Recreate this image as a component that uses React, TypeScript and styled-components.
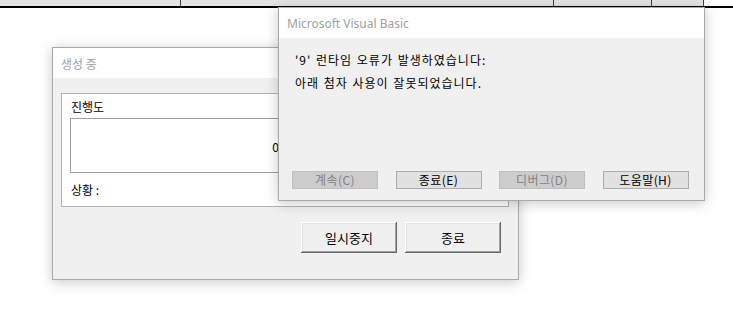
import React from 'react';
import styled, { createGlobalStyle } from 'styled-components';

const GlobalStyle = createGlobalStyle`
  html, body {
    margin: 0;
    padding: 0;
    background: #ffffff;
  }
  body {
    font-family: "Noto Sans CJK KR", "Noto Sans", sans-serif;
    font-size: 12px;
    color: #000;
  }
`;

const Desktop = styled.div`
  position: relative;
  width: 733px;
  height: 319px;
  overflow: hidden;
  background: #ffffff;
`;

// 뒤쪽 시트의 헤더 줄
const SheetStrip = styled.div`
  display: flex;
  height: 6px;
  border-bottom: 2px solid #000;
`;

const SheetCell = styled.div<{ $w: number; $blank?: boolean }>`
  width: ${(p) => p.$w}px;
  flex: none;
  background: ${(p) => (p.$blank ? '#ffffff' : '#e4e4e4')};
  border-right: ${(p) => (p.$blank ? 'none' : '1px solid #3c3c3c')};
  box-sizing: border-box;
`;

const Window = styled.div<{ $x: number; $y: number; $w: number; $h: number }>`
  position: absolute;
  left: ${(p) => p.$x}px;
  top: ${(p) => p.$y}px;
  width: ${(p) => p.$w}px;
  height: ${(p) => p.$h}px;
  box-sizing: border-box;
  display: flex;
  flex-direction: column;
  background: #f0f0f0;
  border: 1px solid #a9a9a9;
  box-shadow: 0 2px 12px rgba(0, 0, 0, 0.22);
`;

const TitleBar = styled.div<{ $latin?: boolean }>`
  height: 30px;
  flex: none;
  background: #ffffff;
  display: flex;
  align-items: center;
  padding-left: 8px;
  color: #a0a0a0;
  font-family: ${(p) =>
    p.$latin ? '"Noto Sans", "Open Sans", sans-serif' : '"Noto Sans CJK KR", sans-serif'};
  font-size: 12px;
`;

/* 생성 중 창 */
const ProgressBody = styled.div`
  flex: 1;
  display: flex;
  flex-direction: column;
  padding: 15px 9px 0 8px;
`;

const Frame = styled.div`
  height: 114px;
  box-sizing: border-box;
  background: #ffffff;
  border: 1px solid #b4b4b4;
  padding: 0 8px;
  display: flex;
  flex-direction: column;
`;

const FieldLabel = styled.div`
  height: 24px;
  line-height: 26px;
  padding-left: 1px;
  font-size: 12px;
`;

const ProgressBox = styled.div`
  height: 55px;
  box-sizing: border-box;
  border: 1px solid #a0a0a0;
  display: flex;
  align-items: center;
  justify-content: center;
  font-size: 12px;
  padding-right: 8px;
  padding-top: 1px;
`;

const StatusRow = styled.div`
  flex: 1;
  display: flex;
  align-items: center;
  padding-left: 1px;
  font-size: 12px;
`;

const ButtonRow = styled.div`
  display: flex;
  justify-content: flex-end;
  gap: 8px;
  margin-top: 15px;
  padding-right: 8px;
`;

const ClassicButton = styled.button`
  width: 96px;
  height: 31px;
  padding: 0;
  border: none;
  background: #f0f0f0;
  font-family: "Noto Sans CJK KR", sans-serif;
  font-size: 13px;
  color: #000;
  box-shadow: inset -1px -1px #696969, inset 1px 1px #ffffff, inset -2px -2px #a0a0a0,
    inset 2px 2px #e3e3e3;
`;

/* 메시지 상자 */
const MessageBody = styled.div`
  flex: 1;
  display: flex;
  flex-direction: column;
  padding: 10px 0 11px 16px;
`;

const MessageLine = styled.div`
  height: 23px;
  line-height: 23px;
  font-size: 12px;
  letter-spacing: 1px;
  word-spacing: 1px;
`;

const MessageButtons = styled.div`
  margin-top: auto;
  display: flex;
  gap: 17.5px;
  margin-left: -3px;
`;

const MsgButton = styled.button<{ $disabled?: boolean }>`
  width: 86px;
  height: 18px;
  padding: 0;
  box-sizing: border-box;
  font-family: "Noto Sans CJK KR", sans-serif;
  font-size: 12px;
  line-height: 16px;
  letter-spacing: 0.4px;
  background: ${(p) => (p.$disabled ? '#cccccc' : '#e1e1e1')};
  border: 1px solid ${(p) => (p.$disabled ? '#bfbfbf' : '#adadad')};
  color: ${(p) => (p.$disabled ? '#838383' : '#000000')};
`;

const sheetCells = [181, 373, 98, 52];

const App = () => {
  return (
    <>
      <GlobalStyle />
      <Desktop>
        <SheetStrip>
          {sheetCells.map((w, i) => (
            <SheetCell key={i} $w={w} />
          ))}
          <SheetCell $w={29} $blank />
        </SheetStrip>

        <Window $x={52} $y={47} $w={467} $h={233}>
          <TitleBar>생성 중</TitleBar>
          <ProgressBody>
            <Frame>
              <FieldLabel>진행도</FieldLabel>
              <ProgressBox>0%</ProgressBox>
              <StatusRow>상황 :</StatusRow>
            </Frame>
            <ButtonRow>
              <ClassicButton>일시중지</ClassicButton>
              <ClassicButton>종료</ClassicButton>
            </ButtonRow>
          </ProgressBody>
        </Window>

        <Window $x={278} $y={7} $w={427} $h={194}>
          <TitleBar $latin>Microsoft Visual Basic</TitleBar>
          <MessageBody>
            <MessageLine>'9' 런타임 오류가 발생하였습니다:</MessageLine>
            <MessageLine>아래 첨자 사용이 잘못되었습니다.</MessageLine>
            <MessageButtons>
              <MsgButton $disabled>계속(C)</MsgButton>
              <MsgButton>종료(E)</MsgButton>
              <MsgButton $disabled>디버그(D)</MsgButton>
              <MsgButton>도움말(H)</MsgButton>
            </MessageButtons>
          </MessageBody>
        </Window>
      </Desktop>
    </>
  );
};

export default App;
